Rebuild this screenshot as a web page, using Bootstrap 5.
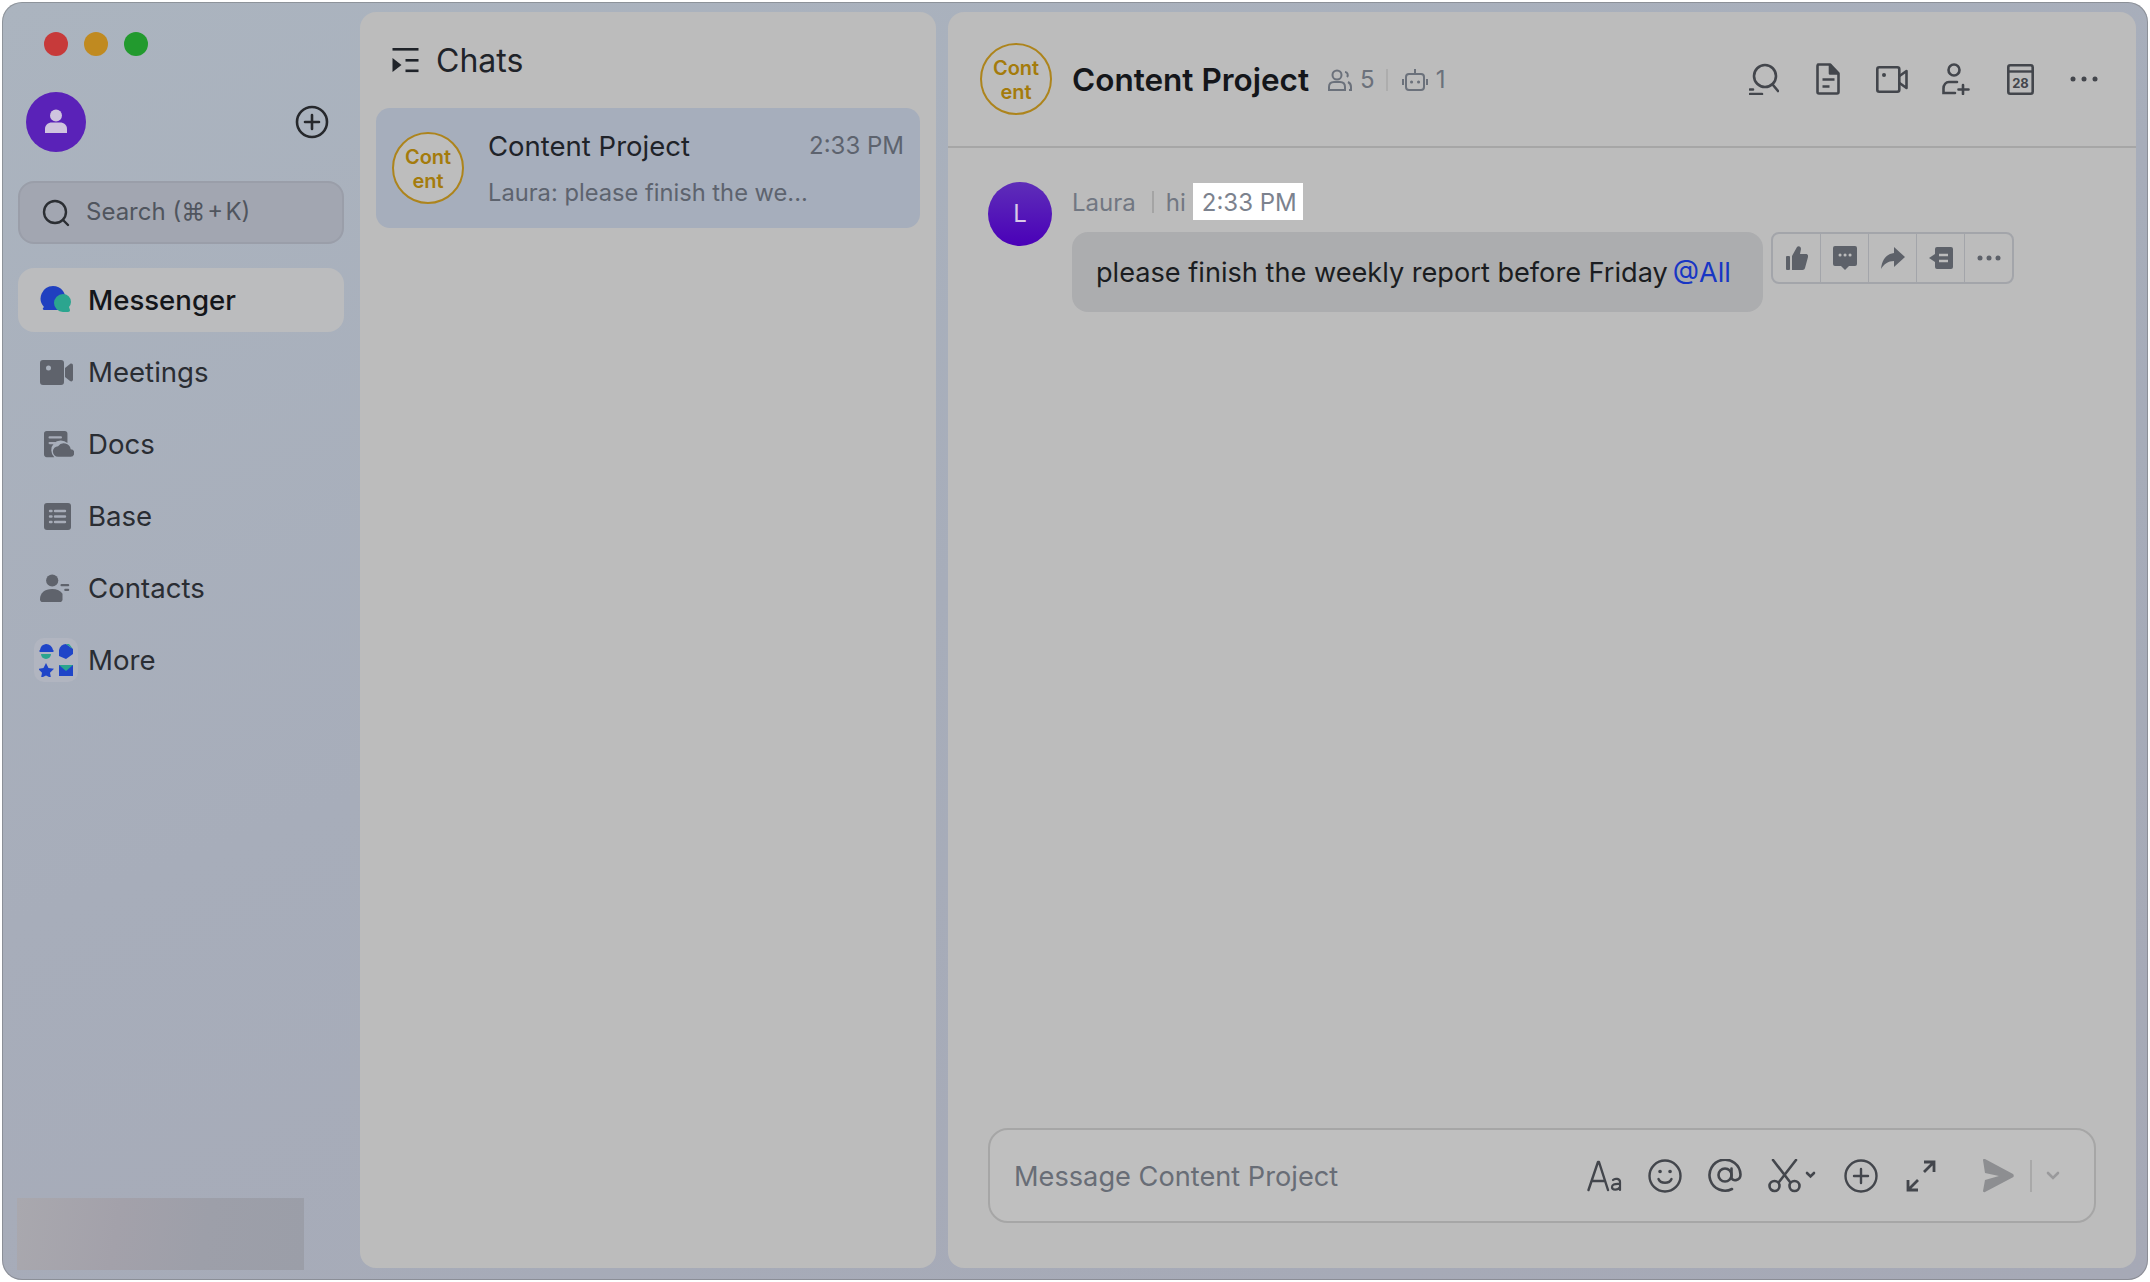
<!DOCTYPE html>
<html lang="en">
<head>
  <meta charset="UTF-8">
  <title>Messenger</title>
  <link href="https://cdn.jsdelivr.net/npm/bootstrap@5.3.0/dist/css/bootstrap.min.css" rel="stylesheet">
  <style>
    html, body { height: 100%; }
    body { background: #fff; font-family: Inter, "Liberation Sans", sans-serif; color: #1f2329; overflow: hidden; }
    .app-shell { width: 2146px; height: 1278px; margin: 2px 0 0 2px; border-radius: 20px; background: linear-gradient(160deg, #abb4bf 0%, #a7adba 45%, #a6a9b6 100%); box-shadow: inset 0 0 0 1px rgba(90,90,90,.35); }
    .side-col { width: 358px; padding: 30px 16px 10px 16px; }
    .dot { width: 24px; height: 24px; border-radius: 50%; }
    .dot-red { background: #c73a3a; }
    .dot-amber { background: #c08a20; }
    .dot-green { background: #229a2e; }
    .lights { margin-left: 26px; gap: 16px; }
    .me-row { margin: 36px 0 0 8px; height: 60px; padding-right: 15px; }
    .me-avatar { width: 60px; height: 60px; border-radius: 50%; background: #5a22b8; }
    .side-search { height: 63px; margin-top: 29px; border-radius: 16px; background: #a2a6b1; border: 2px solid #9a9ea9; padding-left: 22px; gap: 16px; font-size: 24px; color: #50555e; }
    .side-search span { padding-bottom: 2px; }
    .side-list { margin-top: 24px; gap: 8px; }
    .side-item { height: 64px; border-radius: 16px; font-size: 27.6px; color: #2a2d33; }
    .side-item > span { padding-top: 2px; }
    .side-item.active { background: #bbbcbe; color: #14161a; font-weight: 500; }
    .side-ico { width: 70px; padding-left: 22px; flex: none; }
    .ico-tile { width: 44px; height: 44px; border-radius: 10px; background: #b1b5c0; margin-left: -6px; }
    .blur-block { width: 287px; height: 72px; margin: auto 0 0 -1px; background: linear-gradient(100deg, #a9a8ae 0%, #a3a1aa 35%, #9d9fa9 65%, #9b9ea8 100%); }
    .panel-box { background: #bcbcbc; border-radius: 16px; }
    .chat-list { width: 576px; margin: 10px 12px 12px 0; }
    .list-head { height: 96px; padding: 0 0 0 32px; gap: 17px; font-size: 32px; color: #1f2329; }
    .list-head span { padding-top: 2px; }
    .chat-row { height: 120px; margin: 0 16px; border-radius: 14px; background: #a6aebc; padding: 0 16px; }
    .logo-circle { border: 2px solid #ad841c; border-radius: 50%; background: #bdbdbd; color: #a47b0c; font-weight: 600; text-align: center; font-size: 20px; line-height: 24px; width: 72px; height: 72px; padding-top: 2px; flex: none; }
    .row-body { margin-left: 24px; min-width: 0; flex: 1; padding-top: 2px; }
    .row-name { font-size: 27.5px; color: #1f2329; line-height: 36px; }
    .row-time { font-size: 24px; color: #5d636e; line-height: 36px; }
    .row-prev { font-size: 23.7px; color: #5d636e; margin-top: 11px; line-height: 36px; }
    .chat-pane { flex: 1; margin: 10px 12px 12px 0; }
    .pane-head { height: 136px; padding: 0 32px 0 32px; border-bottom: 2px solid #a6a6a6; }
    .pane-title { font-size: 31.5px; font-weight: 600; color: #14161a; margin-left: 20px; padding-top: 2px; }
    .pane-meta { font-size: 24px; color: #6b717b; margin-left: 19px; padding-top: 2px; }
    .meta-sep { width: 2px; height: 22px; background: #adadad; margin: 0 14px 0 11px; }
    .meta-num { margin-left: 8px; }
    .meta-num-tight { margin-left: 8px; }
    .head-tools { gap: 24px; margin-left: auto; }
    .tool-cell { width: 40px; height: 40px; }
    .msg-area { padding: 34px 0 0 40px; }
    .msg-avatar { width: 64px; height: 64px; border-radius: 50%; background: linear-gradient(180deg, #5e2eb8, #4a00b8); color: #d9c9e8; font-size: 24px; flex: none; }
    .msg-col { margin-left: 20px; }
    .msg-meta { height: 37px; margin-top: 1px; font-size: 24px; color: #717782; }
    .meta-txt { padding-top: 2px; }
    .msg-sep { width: 2px; height: 22px; background: #a4a4a4; margin: 0 12px 0 16px; }
    .time-flag { background: #fff; height: 37px; padding: 0 6px 0 9px; margin-left: 7px; line-height: 39px; color: #7c828e; }
    .msg-line { margin-top: 12px; gap: 8px; }
    .msg-bubble { width: 691px; height: 80px; padding: 2px 0 0 24px; border-radius: 16px; background: #acadaf; font-size: 27.15px; color: #1b1d21; white-space: nowrap; }
    .msg-at { color: #1836c4; margin-left: 5px; }
    .msg-actions { width: 243px; height: 52px; border: 2px solid #a3a5aa; border-radius: 8px; }
    .act-cell { flex: 1; height: 100%; border-left: 1px solid #a3a5aa; }
    .act-cell:first-child { border-left: 0; }
    .msg-input { height: 95px; margin: auto 40px 45px 40px; border: 2px solid #a6a6a6; border-radius: 20px; background: #bfbfbf; padding: 0 0 0 24px; font-size: 27.2px; color: #686d76; }
    .input-hint { padding-top: 3px; }
    .input-tools { margin-left: auto; width: 519px; }
    .input-slot { width: 60px; height: 44px; }
    .input-slot-wide { width: 76px; }
    .send-sep { height: 32px; margin: 0 14px 0 16px; background: #a9a9a9; }
    .send-chev { margin-right: 34px; }
    svg { display: block; }
  </style>
</head>
<body>
  <div class="app-shell d-flex">
    <div class="side-col d-flex flex-column">
      <div class="lights d-flex">
        <div class="dot dot-red"></div><div class="dot dot-amber"></div><div class="dot dot-green"></div>
      </div>
      <div class="me-row d-flex align-items-center justify-content-between">
        <div class="me-avatar d-flex align-items-center justify-content-center">
          <svg width="28" height="28" viewBox="0 0 28 28" fill="#cfc4de"><circle cx="14" cy="7.5" r="6"/><path d="M3 25v-4c0-4 3-6.500 7-6.500h8c4 0 7 2.500 7 6.500v4z"/></svg>
        </div>
        <svg width="34" height="34" viewBox="0 0 34 34" fill="none" stroke="#26282c" stroke-width="2.600"><circle cx="17" cy="17" r="15"/><path d="M17 10v14M10 17h14" stroke-linecap="round"/></svg>
      </div>
      <div class="side-search d-flex align-items-center">
        <svg width="28" height="28" viewBox="0 0 28 28" fill="none" stroke="#2b2e33" stroke-width="2.400"><circle cx="13" cy="13" r="11"/><path d="M21 21l5 5" stroke-linecap="round"/></svg>
        <span>Search (⌘&#8202;+&#8202;K)</span>
      </div>
      <div class="side-list d-flex flex-column">
        <div class="side-item active d-flex align-items-center">
          <div class="side-ico">
            <svg width="32" height="28" viewBox="0 0 32 28"><path d="M13 0a12.500 12.500 0 0 1 12 16v8H4c-1 0-1.500-1-1-2l1-1A12.500 12.500 0 0 1 13 0z" fill="#2040c0"/><path d="M23 8a8 8 0 0 1 8 8v0a8 8 0 0 1-2 5l1 3c0 1-.5 2-2 2h-5a8.500 8.500 0 0 1 0-18z" fill="#2ba58f"/></svg>
          </div>
          <span>Messenger</span>
        </div>
        <div class="side-item d-flex align-items-center">
          <div class="side-ico">
            <svg width="33" height="25" viewBox="0 0 33 25" fill="#5f636c"><path d="M3 0h18a3 3 0 0 1 3 3v19a3 3 0 0 1-3 3H3a3 3 0 0 1-3-3V3a3 3 0 0 1 3-3zm5.500 5.500a2.500 2.500 0 1 0 0 5 2.500 2.500 0 0 0 0-5z" fill-rule="evenodd"/><path d="M25 8l5-4c1.500-1 3 0 3 1.500v14c0 1.500-1.500 2.500-3 1.500l-5-4z"/></svg>
          </div>
          <span>Meetings</span>
        </div>
        <div class="side-item d-flex align-items-center">
          <div class="side-ico">
            <svg width="30" height="28" viewBox="0 0 32 28" class="ms-1"><path d="M3 0h19a3 3 0 0 1 3 3v10a10 10 0 0 0-14 15H3a3 3 0 0 1-3-3V3a3 3 0 0 1 3-3z" fill="#5f636c"/><path d="M6 7h12M6 13h6" stroke="#a7acb8" stroke-width="2.400" stroke-linecap="round"/><path d="M15 27.500a5.500 5.500 0 0 1 0-11 7.500 7.500 0 0 1 13.500 3 4 4 0 0 1-.5 8z" fill="#5f636c"/></svg>
          </div>
          <span>Docs</span>
        </div>
        <div class="side-item d-flex align-items-center">
          <div class="side-ico">
            <svg width="27" height="27" viewBox="0 0 27 27" class="ms-1"><rect width="27" height="27" rx="3" fill="#5f636c"/><path d="M6 8h1.500M6 13.500h1.500M6 19h1.500M11 8h10M11 13.500h10M11 19h10" stroke="#a7acb8" stroke-width="2.400" stroke-linecap="round"/></svg>
          </div>
          <span>Base</span>
        </div>
        <div class="side-item d-flex align-items-center">
          <div class="side-ico">
            <svg width="30" height="30" viewBox="0 0 32 30" fill="#5f636c"><circle cx="13" cy="7" r="6.500"/><path d="M0 27c0-7 5-11 13-11 5 0 9 2 11 5v6c0 2-1 3-3 3H3c-2 0-3-1-3-3z"/><path d="M23 12h7M27 17h3" stroke="#5f636c" stroke-width="2.400" stroke-linecap="round"/></svg>
          </div>
          <span>Contacts</span>
        </div>
        <div class="side-item d-flex align-items-center">
          <div class="side-ico">
            <div class="ico-tile d-flex align-items-center justify-content-center">
              <svg width="34" height="34" viewBox="0 0 34 34"><path d="M7 1a7 7 0 0 1 7 6c1 .5 1 1.500 0 2H1C0 8.500 0 7.500 1 7a7 7 0 0 1 6-6z" fill="#1f45c8"/><path d="M2 11h10a5 5 0 0 1-10 0z" fill="#2ba58f"/><path d="M20 7a7 7 0 0 1 7-6l7 5v5l-7 5-7-3z" fill="#1f45c8"/><path d="M27 1h3l4 5z" fill="#2ba58f"/><path d="M7 20l2.500 5 5.500.8-4 3.900 1 5.300-5-2.600-5 2.600 1-5.300-4-3.900 5.500-.8z" fill="#1f45c8"/><rect x="20" y="22" width="14" height="11" fill="#1f45c8"/><path d="M20 22h14l-7 6z" fill="#2ba58f"/></svg>
            </div>
          </div>
          <span>More</span>
        </div>
      </div>
      <div class="blur-block"></div>
    </div>

    <div class="chat-list panel-box">
      <div class="list-head d-flex align-items-center">
        <svg width="27" height="25" viewBox="0 0 26 25" fill="#1f2329"><rect width="26" height="2.600"/><rect x="13" y="11" width="13" height="2.600"/><rect x="13" y="21.500" width="13" height="2.600"/><path d="M0 10l9 7-9 7z"/></svg>
        <span>Chats</span>
      </div>
      <div class="chat-row d-flex align-items-center">
        <div class="logo-circle d-flex flex-column justify-content-center"><span>Cont</span><span>ent</span></div>
        <div class="row-body">
          <div class="d-flex justify-content-between">
            <span class="row-name">Content Project</span>
            <span class="row-time">2:33 PM</span>
          </div>
          <div class="row-prev">Laura: please finish the we...</div>
        </div>
      </div>
    </div>

    <div class="chat-pane panel-box d-flex flex-column">
      <div class="pane-head d-flex align-items-center">
        <div class="logo-circle d-flex flex-column justify-content-center"><span>Cont</span><span>ent</span></div>
        <span class="pane-title">Content Project</span>
        <div class="pane-meta d-flex align-items-center">
          <svg width="24" height="22" viewBox="0 0 24 22" fill="none" stroke="#6b717b" stroke-width="2"><circle cx="9" cy="6" r="4.500"/><path d="M1 21v-3c0-3 2-5 5-5h6c3 0 5 2 5 5v3z"/><path d="M17 3a3 3 0 0 1 2 5M20 13c2 1 3 3 3 5v3h-2"/></svg>
          <span class="meta-num">5</span>
          <span class="meta-sep"></span>
          <svg width="26" height="24" viewBox="0 0 26 24" fill="none" stroke="#6b717b" stroke-width="2"><rect x="4" y="6" width="18" height="16" rx="3"/><path d="M13 6V1M1 11v6M25 11v6"/><path d="M9.500 14h.1M16.500 14h.1" stroke-width="3" stroke-linecap="round"/></svg>
          <span class="meta-num-tight">1</span>
        </div>
        <div class="head-tools d-flex align-items-center">
          <div class="tool-cell d-flex align-items-center justify-content-center">
            <svg width="30" height="32" viewBox="0 0 30 32" fill="none" stroke="#43464c" stroke-width="2.600"><circle cx="16" cy="13" r="11"/><path d="M24 22l5 6M1 31h12M1 26.500h3" stroke-linecap="round"/></svg>
          </div>
          <div class="tool-cell d-flex align-items-center justify-content-center">
            <svg width="24" height="32" viewBox="0 0 24 32" fill="none" stroke="#43464c" stroke-width="2.600" stroke-linejoin="round"><path d="M2 1.500h12l8.500 9V29a1.500 1.500 0 0 1-1.500 1.500H3A1.500 1.500 0 0 1 1.500 29V3z"/><path d="M14 1.500v9h8.500" fill="#43464c"/><path d="M6.500 16.500h12M6.500 23.500h7"/></svg>
          </div>
          <div class="tool-cell d-flex align-items-center justify-content-center">
            <svg width="32" height="27" viewBox="0 0 32 27" fill="none" stroke="#43464c" stroke-width="2.600" stroke-linejoin="round"><rect x="1.300" y="1.300" width="22" height="24.400" rx="2"/><path d="M23.500 10l7-5v17l-7-5"/><circle cx="8" cy="9" r="2" fill="#43464c" stroke="none"/></svg>
          </div>
          <div class="tool-cell d-flex align-items-center justify-content-center">
            <svg width="28" height="32" viewBox="0 0 28 32" fill="none" stroke="#43464c" stroke-width="2.600" stroke-linecap="round"><circle cx="12" cy="7" r="5.500"/><path d="M15 19H7c-3 0-5.500 2.500-5.500 6.500v4.500H13M21 22v9M16.500 26.500h10"/></svg>
          </div>
          <div class="tool-cell d-flex align-items-center justify-content-center">
            <svg width="27" height="31" viewBox="0 0 27 31"><rect x="1.300" y="1.300" width="24.400" height="28.400" rx="2" fill="none" stroke="#43464c" stroke-width="2.600"/><path d="M1 7.500h25" stroke="#43464c" stroke-width="2.400"/><text x="13.500" y="24" text-anchor="middle" font-family="Inter, sans-serif" font-size="13" font-weight="700" fill="#43464c">28</text></svg>
          </div>
          <div class="tool-cell d-flex align-items-center justify-content-center">
            <svg width="28" height="6" viewBox="0 0 28 6" fill="#43464c"><circle cx="3" cy="3" r="2.500"/><circle cx="14" cy="3" r="2.500"/><circle cx="25" cy="3" r="2.500"/></svg>
          </div>
        </div>
      </div>

      <div class="msg-area d-flex">
        <div class="msg-avatar d-flex align-items-center justify-content-center">L</div>
        <div class="msg-col">
          <div class="msg-meta d-flex align-items-center">
            <span class="meta-txt">Laura</span><span class="msg-sep"></span><span class="meta-txt">hi</span><span class="time-flag">2:33 PM</span>
          </div>
          <div class="msg-line d-flex">
            <div class="msg-bubble d-flex align-items-center"><span>please finish the weekly report before Friday</span><span class="msg-at">@All</span></div>
            <div class="msg-actions d-flex">
              <div class="act-cell d-flex align-items-center justify-content-center">
                <svg width="22" height="24" viewBox="0 0 22 24" fill="#5d6169"><rect y="10" width="4" height="14" rx="1"/><path d="M6 10l5-9c1.500-1.500 4-.500 4 2l-1 5h6c1.500 0 2.500 1.500 2 3l-3 11c-.3 1.200-1.200 2-2.500 2H6z"/></svg>
              </div>
              <div class="act-cell d-flex align-items-center justify-content-center">
                <svg width="24" height="24" viewBox="0 0 24 24"><path d="M2 0h20a2 2 0 0 1 2 2v16a2 2 0 0 1-2 2h-6l-4 4-4-4H2a2 2 0 0 1-2-2V2a2 2 0 0 1 2-2z" fill="#5d6169"/><path d="M7 9h.1M12 9h.1M17 9h.1" stroke="#bcbcbc" stroke-width="3" stroke-linecap="round"/></svg>
              </div>
              <div class="act-cell d-flex align-items-center justify-content-center">
                <svg width="24" height="22" viewBox="0 0 24 22" fill="#5d6169"><path d="M13 0l11 10-11 10v-6C7 14 3 17 0 22c1-9 5-15 13-16z"/></svg>
              </div>
              <div class="act-cell d-flex align-items-center justify-content-center">
                <svg width="24" height="22" viewBox="0 0 24 22"><path d="M8 0h14a2 2 0 0 1 2 2v18a2 2 0 0 1-2 2H8a2 2 0 0 1-2-2v-5L0 11l6-4V2a2 2 0 0 1 2-2z" fill="#5d6169"/><path d="M10 8h9M10 14h9" stroke="#bcbcbc" stroke-width="2.400"/></svg>
              </div>
              <div class="act-cell d-flex align-items-center justify-content-center">
                <svg width="24" height="6" viewBox="0 0 24 6" fill="#5d6169"><circle cx="3" cy="3" r="2.500"/><circle cx="12" cy="3" r="2.500"/><circle cx="21" cy="3" r="2.500"/></svg>
              </div>
            </div>
          </div>
        </div>
      </div>

      <div class="msg-input d-flex align-items-center">
        <span class="input-hint">Message Content Project</span>
        <div class="input-tools d-flex align-items-center">
          <div class="input-slot d-flex align-items-center justify-content-center">
            <svg width="36" height="32" viewBox="0 0 36 32" fill="none" stroke="#43464c" stroke-width="2.400" stroke-linecap="round" stroke-linejoin="round"><path d="M1.500 30L11 2h1l9 28M5 21h13"/><path d="M26 20c2-2 7-1.500 7 2v8M33 24c-6-.5-8 1-8 3 0 3.500 6 3.500 8 0" stroke-width="2.200"/></svg>
          </div>
          <div class="input-slot d-flex align-items-center justify-content-center">
            <svg width="34" height="34" viewBox="0 0 34 34" fill="none" stroke="#43464c" stroke-width="2.400" stroke-linecap="round"><circle cx="17" cy="17" r="15.500"/><path d="M10.500 20c2 5 11 5 13 0"/><path d="M12 12.500h.1M22 12.500h.1" stroke-width="3.600"/></svg>
          </div>
          <div class="input-slot d-flex align-items-center justify-content-center">
            <svg width="34" height="34" viewBox="0 0 34 34" fill="none" stroke="#43464c" stroke-width="2.600" stroke-linecap="round"><circle cx="17" cy="16" r="6.500"/><path d="M23.500 9.500v9c0 4 9 4 9-3A15.500 15.500 0 1 0 24 30"/></svg>
          </div>
          <div class="input-slot input-slot-wide d-flex align-items-center justify-content-center">
            <svg width="50" height="34" viewBox="0 0 50 34" fill="none" stroke="#43464c" stroke-width="2.600" stroke-linecap="round"><circle cx="6.500" cy="27" r="5"/><circle cx="26.500" cy="27" r="5"/><path d="M5 1l17 22M28 1L11 23"/><path d="M39 14l3.500 3.500L46 14"/></svg>
          </div>
          <div class="input-slot d-flex align-items-center justify-content-center">
            <svg width="34" height="34" viewBox="0 0 34 34" fill="none" stroke="#43464c" stroke-width="2.400" stroke-linecap="round"><circle cx="17" cy="17" r="15.500"/><path d="M17 10v14M10 17h14"/></svg>
          </div>
          <div class="input-slot d-flex align-items-center justify-content-center">
            <svg width="30" height="32" viewBox="0 0 30 32" fill="none" stroke="#43464c" stroke-width="2.800"><path d="M18 2h10v10M28 2L18 12M2 20v10h10M2 30l10-10"/></svg>
          </div>
          <div class="d-flex align-items-center ms-auto">
            <svg width="32" height="34" viewBox="0 0 32 34" fill="#8d8e91"><path d="M1 1c0-1 1-1.500 2-1l28 15c1 .8 1 2.500 0 3.200L3 33c-1 .5-2 0-2-1l2-11 14-4-14-3z"/></svg>
            <span class="meta-sep send-sep"></span>
            <svg class="send-chev" width="14" height="10" viewBox="0 0 14 10" fill="none" stroke="#9a9a9c" stroke-width="2.600" stroke-linecap="round"><path d="M2 2l5 5 5-5"/></svg>
          </div>
        </div>
      </div>
    </div>
  </div>
  <script src="https://cdn.jsdelivr.net/npm/bootstrap@5.3.0/dist/js/bootstrap.bundle.min.js"></script>
</body>
</html>
